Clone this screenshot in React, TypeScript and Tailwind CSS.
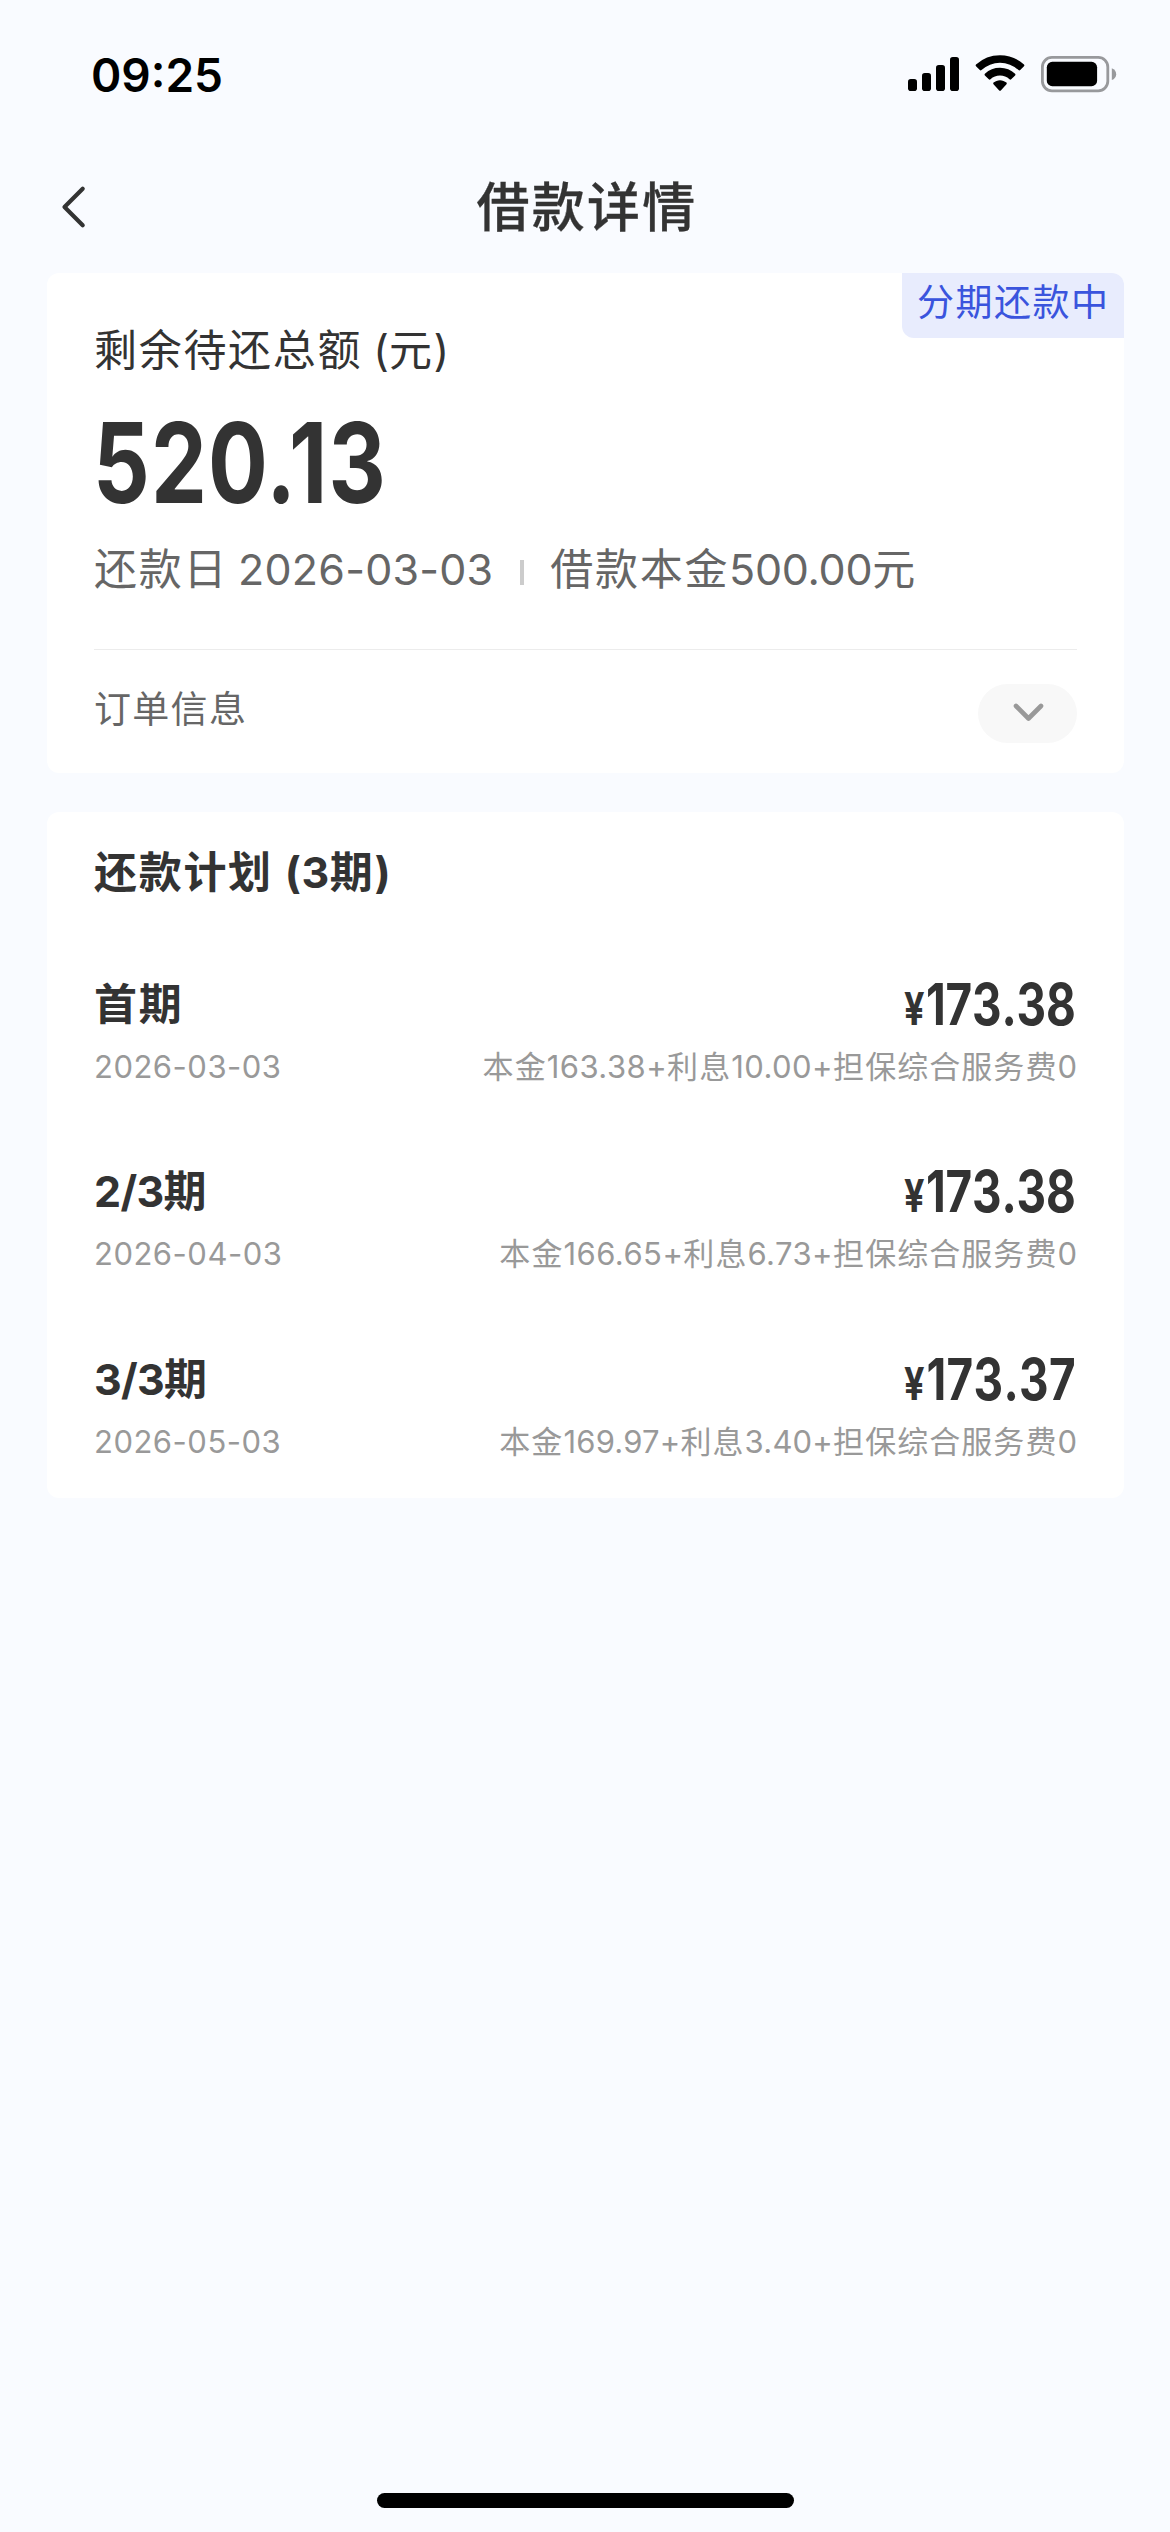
import type { ReactNode } from "react";

type Installment = {
  prefix: string;
  label: string;
  date: string;
  amount: string;
  principal: string;
  interest: string;
  amountTracking: string;
  detailTracking: string;
};

const installments: Installment[] = [
  { prefix: "", label: "首期", date: "2026-03-03", amount: "173.38", principal: "163.38", interest: "10.00", amountTracking: "tracking-[-0.200px]", detailTracking: "tracking-[0.450px]" },
  { prefix: "2/3", label: "期", date: "2026-04-03", amount: "173.38", principal: "166.65", interest: "6.73", amountTracking: "tracking-[-0.200px]", detailTracking: "tracking-[0.450px]" },
  { prefix: "3/3", label: "期", date: "2026-05-03", amount: "173.37", principal: "169.97", interest: "3.40", amountTracking: "tracking-[0.400px]", detailTracking: "tracking-[0.200px]" },
];

function StatusBar() {
  return (
    <div className="flex h-[148px] items-start justify-between pr-[53px] pl-[91px] pt-[45px] text-black">
      <span className="text-[46px] leading-[60px] font-semibold">09:25</span>
      <svg className="mt-[5px] h-[48px] w-[210px]" viewBox="906 50 210 48" fill="none">
        <rect x="907" y="79" width="9" height="12" rx="2.8" fill="#000" />
        <rect x="921" y="73" width="9" height="18" rx="2.8" fill="#000" />
        <rect x="935" y="65" width="9" height="26" rx="2.8" fill="#000" />
        <rect x="949" y="57" width="9" height="34" rx="2.8" fill="#000" />
        <path d="M999 55.2c9.200 0 17.600 3.500 24 9.300.5.500.5 1.200 0 1.700l-3.800 3.900c-.5.500-1.200.5-1.700 0a27.200 27.200 0 0 0-37 0c-.5.500-1.200.500-1.700 0l-3.800-3.900c-.5-.500-.5-1.200 0-1.700a35.500 35.500 0 0 1 24-9.300z" fill="#000" />
        <path d="M999 67.800c5.800 0 11.100 2.200 15.100 5.900.5.500.5 1.200 0 1.700l-3.900 3.900c-.5.500-1.200.5-1.700 0a14 14 0 0 0-19 0c-.5.500-1.200.5-1.700 0l-3.900-3.900c-.5-.500-.5-1.200 0-1.700a22.200 22.200 0 0 1 15.100-5.900z" fill="#000" />
        <path d="M999 80.200c2.400 0 4.700.9 6.400 2.400.5.400.5 1.200.1 1.600l-5.700 6.200c-.4.500-1.200.5-1.600 0l-5.700-6.200c-.4-.400-.4-1.200.1-1.600 1.700-1.500 4-2.400 6.400-2.400z" fill="#000" />
        <rect x="1041.400" y="57.400" width="65.400" height="33.400" rx="9.500" stroke="#98999c" strokeWidth="2.800" />
        <rect x="1045.800" y="61.800" width="50.300" height="24.400" rx="5.500" fill="#000" />
        <path d="M1110.800 68.300c2.700 1 4.400 3.200 4.400 5.900s-1.700 4.900-4.400 5.900z" fill="#98999c" />
      </svg>
    </div>
  );
}

function NavBar() {
  return (
    <header className="grid h-[125px] grid-cols-[1fr_auto_1fr] items-start pt-[20px]">
      <svg className="mt-[14px] ml-[60px] h-[50px] w-[28px]" viewBox="60 182 28 50" fill="none">
        <path d="M82.700 188.800 64.500 207l18.200 18.200" stroke="#333" strokeWidth="4.200" strokeLinecap="round" strokeLinejoin="round" />
      </svg>
      <h1 className="pl-[4px] text-[53px] leading-[80px] font-medium tracking-[2.200px] [-webkit-text-stroke:0.3px_#333]">借款详情</h1>
      <span />
    </header>
  );
}

function Amount({ children }: { children: ReactNode }) {
  return <span className="inline-block origin-left scale-x-80 text-[111px] leading-[100px] font-bold tracking-[1.400px]">{children}</span>;
}

function LoanSummary() {
  return (
    <section className="relative h-[500px] rounded-[12px] bg-white px-[47px] pt-[47px]">
      <div className="absolute top-0 right-0 h-[65px] w-[222px] rounded-tr-[12px] rounded-bl-[12px] bg-[#e8ecfd] pl-[15px] text-[37px] leading-[59px] tracking-[1.500px] whitespace-nowrap text-[#3a54dd]">
        分期还款中
      </div>
      <div className="flex h-[60px] text-[43px] leading-[60px] tracking-[1.700px]">
        <span>剩余待还总额</span>
        <span className="ml-[11px]">
          <span className="tracking-normal">(</span>元<span className="tracking-normal">)</span>
        </span>
      </div>
      <div className="mt-[33px] -ml-px h-[100px]">
        <Amount>520.13</Amount>
      </div>
      <div className="mt-[26px] flex h-[60px] text-[43px] leading-[60px] tracking-[1.700px] text-[#666]">
        <span>还款日</span>
        <span className="ml-[10px] tracking-[0.200px]">2026-03-03</span>
        <span className="mt-[21px] mr-[26px] ml-[27px] h-[25px] w-[4px] bg-[#ccc]" />
        <span>借款本金</span>
        <span className="tracking-[-0.270px]">500.00</span>
        <span>元</span>
      </div>
      <div className="mt-[50px] h-px bg-[#ececec]" />
      <div className="mt-[34px] flex items-start justify-between">
        <span className="pt-px text-[37px] leading-[50px] tracking-[1.300px] text-[#666]">订单信息</span>
        <button className="flex h-[59px] w-[99px] items-center justify-center rounded-full bg-[#f8f8f8]">
          <svg className="mb-[3px] h-[22px] w-[34px]" viewBox="0 0 34 22" fill="none">
            <path d="M5 5 17.500 17.500 30 5" stroke="#999" strokeWidth="4.600" strokeLinecap="round" strokeLinejoin="round" />
          </svg>
        </button>
      </div>
    </section>
  );
}

function InstallmentRow({ item }: { item: Installment }) {
  return (
    <li>
      <div className="flex h-[60px] justify-between leading-[60px] font-bold">
        <span className="text-[43px] tracking-[1.700px]">
          <span className="tracking-[-0.700px]">{item.prefix}</span>
          {item.label}
        </span>
        <span className={`mr-px inline-block origin-right scale-x-80 text-[57.300px] [font-kerning:none] ${item.amountTracking}`}>
          <span className="mr-[2px] text-[45px]">¥</span>
          {item.amount}
        </span>
      </div>
      <div className="mt-[13px] flex h-[40px] justify-between text-[31px] leading-[40px] text-[#999]">
        <span className="tracking-[0.500px]">{item.date}</span>
        <span className="tracking-[1.050px]">
          本金<span className={item.detailTracking}>{item.principal}+</span>
          利息<span className={item.detailTracking}>{item.interest}+</span>
          担保综合服务费<span className="tracking-normal">0</span>
        </span>
      </div>
    </li>
  );
}

function RepaymentPlan() {
  return (
    <section className="mt-[39px] h-[686px] rounded-[12px] bg-white px-[47px] pt-[30px]">
      <h2 className="flex h-[60px] text-[43px] leading-[60px] font-bold tracking-[1.700px]">
        <span>还款计划</span>
        <span className="ml-[12px]">
          <span className="tracking-[0.500px]">(3</span>期<span className="tracking-normal">)</span>
        </span>
      </h2>
      <ul className="mt-[72px] flex flex-col gap-[74.300px]">
        {installments.map((item) => (
          <InstallmentRow key={item.date} item={item} />
        ))}
      </ul>
    </section>
  );
}

export default function App() {
  return (
    <div className="flex h-[2532px] w-[1170px] flex-col overflow-hidden bg-[#f9fbff] font-['Inter','Noto_Sans_CJK_SC',sans-serif] text-[#333]">
      <StatusBar />
      <NavBar />
      <main className="mr-[46px] ml-[47px]">
        <LoanSummary />
        <RepaymentPlan />
      </main>
      <div className="mt-auto mb-[24px] ml-[377px] h-[15px] w-[417px] rounded-full bg-black" />
    </div>
  );
}
